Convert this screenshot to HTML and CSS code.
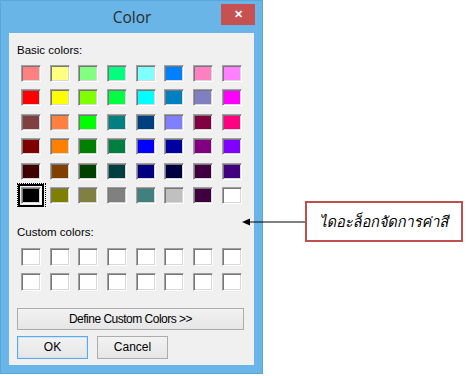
FILE: index.html
```html
<!DOCTYPE html>
<html lang="th">
<head>
    <meta charset="UTF-8">
    <meta name="viewport" content="width=device-width, initial-scale=1.0">
    <title>Color</title>
    <link rel="stylesheet" href="styles.css">
</head>
<body>
    <div class="stage">
        <!-- Pencere -->
        <div class="window">
            <div class="titlebar">
                <span class="title">Color</span>
                <span class="close">&#x2715;</span>
            </div>
            <div class="client">
                <div class="label">Basic colors:</div>
                <div class="swatches basic">
                    <span class="swatch" style="background:#ff8080"></span>
                    <span class="swatch" style="background:#ffff80"></span>
                    <span class="swatch" style="background:#80ff80"></span>
                    <span class="swatch" style="background:#00ff80"></span>
                    <span class="swatch" style="background:#80ffff"></span>
                    <span class="swatch" style="background:#0080ff"></span>
                    <span class="swatch" style="background:#ff80c0"></span>
                    <span class="swatch" style="background:#ff80ff"></span>

                    <span class="swatch" style="background:#ff0000"></span>
                    <span class="swatch" style="background:#ffff00"></span>
                    <span class="swatch" style="background:#80ff00"></span>
                    <span class="swatch" style="background:#00ff40"></span>
                    <span class="swatch" style="background:#00ffff"></span>
                    <span class="swatch" style="background:#0080c0"></span>
                    <span class="swatch" style="background:#8080c0"></span>
                    <span class="swatch" style="background:#ff00ff"></span>

                    <span class="swatch" style="background:#804040"></span>
                    <span class="swatch" style="background:#ff8040"></span>
                    <span class="swatch" style="background:#00ff00"></span>
                    <span class="swatch" style="background:#008080"></span>
                    <span class="swatch" style="background:#004080"></span>
                    <span class="swatch" style="background:#8080ff"></span>
                    <span class="swatch" style="background:#800040"></span>
                    <span class="swatch" style="background:#ff0080"></span>

                    <span class="swatch" style="background:#800000"></span>
                    <span class="swatch" style="background:#ff8000"></span>
                    <span class="swatch" style="background:#008000"></span>
                    <span class="swatch" style="background:#008040"></span>
                    <span class="swatch" style="background:#0000ff"></span>
                    <span class="swatch" style="background:#0000a0"></span>
                    <span class="swatch" style="background:#800080"></span>
                    <span class="swatch" style="background:#8000ff"></span>

                    <span class="swatch" style="background:#400000"></span>
                    <span class="swatch" style="background:#804000"></span>
                    <span class="swatch" style="background:#004000"></span>
                    <span class="swatch" style="background:#004040"></span>
                    <span class="swatch" style="background:#000080"></span>
                    <span class="swatch" style="background:#000040"></span>
                    <span class="swatch" style="background:#400040"></span>
                    <span class="swatch" style="background:#400080"></span>

                    <span class="swatch selected" style="background:#000000"></span>
                    <span class="swatch" style="background:#808000"></span>
                    <span class="swatch" style="background:#808040"></span>
                    <span class="swatch" style="background:#808080"></span>
                    <span class="swatch" style="background:#408080"></span>
                    <span class="swatch" style="background:#c0c0c0"></span>
                    <span class="swatch" style="background:#400040"></span>
                    <span class="swatch" style="background:#ffffff"></span>
                </div>

                <div class="label custom-label">Custom colors:</div>
                <div class="swatches custom">
                    <span class="swatch"></span><span class="swatch"></span><span class="swatch"></span><span class="swatch"></span>
                    <span class="swatch"></span><span class="swatch"></span><span class="swatch"></span><span class="swatch"></span>
                    <span class="swatch"></span><span class="swatch"></span><span class="swatch"></span><span class="swatch"></span>
                    <span class="swatch"></span><span class="swatch"></span><span class="swatch"></span><span class="swatch"></span>
                </div>

                <button type="button" class="btn wide">Define Custom Colors &gt;&gt;</button>
                <div class="actions">
                    <button type="button" class="btn default">OK</button>
                    <button type="button" class="btn">Cancel</button>
                </div>
            </div>
        </div>

        <!-- Açıklama -->
        <svg class="arrow" width="66" height="10" viewBox="0 0 66 10">
            <polygon points="1,5 9,1.5 9,8.5" fill="#000"/>
            <line x1="8" y1="5" x2="66" y2="5" stroke="#000" stroke-width="1"/>
        </svg>
        <div class="callout">ไดอะล็อกจัดการค่าสี</div>
    </div>
</body>
</html>
```

FILE: styles.css
```css
body {
    margin: 0;
    background-color: #fff;
    font-family: "Liberation Sans", Arial, sans-serif;
}
.stage {
    position: relative;
    width: 468px;
    height: 376px;
}

/* Pencere çerçevesi */
.window {
    width: 263px;
    height: 374px;
    box-sizing: border-box;
    background-color: #69b5e8;
    border: 1px solid #5ca6dc;
    padding: 0 8px 8px 8px;
    display: flex;
    flex-direction: column;
}
.titlebar {
    height: 32px;
    display: grid;
    grid-template-columns: 1fr auto 1fr;
    align-items: start;
}
.title {
    grid-column: 2;
    font-family: "Open Sans", "Liberation Sans", sans-serif;
    font-size: 15.5px;
    color: #2b2b2b;
    line-height: 32px;
    margin-left: 1px;
}
.close {
    grid-column: 3;
    justify-self: end;
    margin-top: 3px;
    margin-right: -1px;
    width: 34px;
    height: 21px;
    background-color: #c75050;
    color: #fff;
    font-size: 11px;
    font-weight: bold;
    line-height: 21px;
    text-align: center;
}

/* İçerik alanı */
.client {
    flex: 1;
    background-color: #f0f0f0;
    padding: 11px 0 0 8px;
    font-size: 11.5px;
    color: #000;
}
.label {
    line-height: 13px;
}
.swatches {
    display: grid;
    grid-template-columns: repeat(8, 20px);
    column-gap: 8.7px;
    margin-left: 4px;
}
.basic {
    margin-top: 8px;
    grid-auto-rows: 17px;
    row-gap: 7.4px;
}
.custom-label {
    margin-top: 22px;
}
.custom {
    margin-top: 9px;
    grid-auto-rows: 18px;
    row-gap: 7px;
}
.swatch {
    position: relative;
    box-sizing: border-box;
    border: 1px solid;
    border-color: #a0a0a0 #fff #fff #a0a0a0;
    box-shadow: inset 1px 1px 0 #777, inset -1px -1px 0 #d8d8d8;
}
.custom .swatch {
    background-color: #fff;
}
.swatch.selected {
    outline: 2px solid #000;
    outline-offset: 1px;
}
.swatch.selected::after {
    content: "";
    position: absolute;
    top: -5px;
    left: -5px;
    right: -6px;
    bottom: -4px;
    border: 1px dotted #000;
}

/* Düğmeler */
.btn {
    font-family: "Liberation Sans", Arial, sans-serif;
    font-size: 12px;
    color: #000;
    background: linear-gradient(#f2f2f2, #e6e6e6);
    border: 1px solid #acacac;
    padding: 0;
    margin: 0;
    display: block;
}
.wide {
    margin-top: 17px;
    width: 227px;
    height: 22px;
    letter-spacing: -0.5px;
}
.actions {
    display: flex;
    gap: 9px;
    margin-top: 6px;
}
.actions .btn {
    width: 71px;
    height: 23px;
}
.btn.default {
    border-color: #5fa8ea;
    box-shadow: inset 0 0 0 1px #cde5fa;
}

/* Açıklama kutusu ve ok */
.arrow {
    position: absolute;
    left: 241px;
    top: 217px;
}
.callout {
    position: absolute;
    left: 305px;
    top: 201px;
    width: 158px;
    height: 41px;
    box-sizing: border-box;
    border: 2px solid #c0504d;
    background-color: #fff;
    font-family: Tahoma, "Loma", "Garuda", "Noto Sans Thai Looped", "Noto Serif Thai", "Noto Sans Thai", "Noto Sans", sans-serif;
    font-style: italic;
    font-size: 14.5px;
    display: flex;
    align-items: center;
    justify-content: center;
}
```
